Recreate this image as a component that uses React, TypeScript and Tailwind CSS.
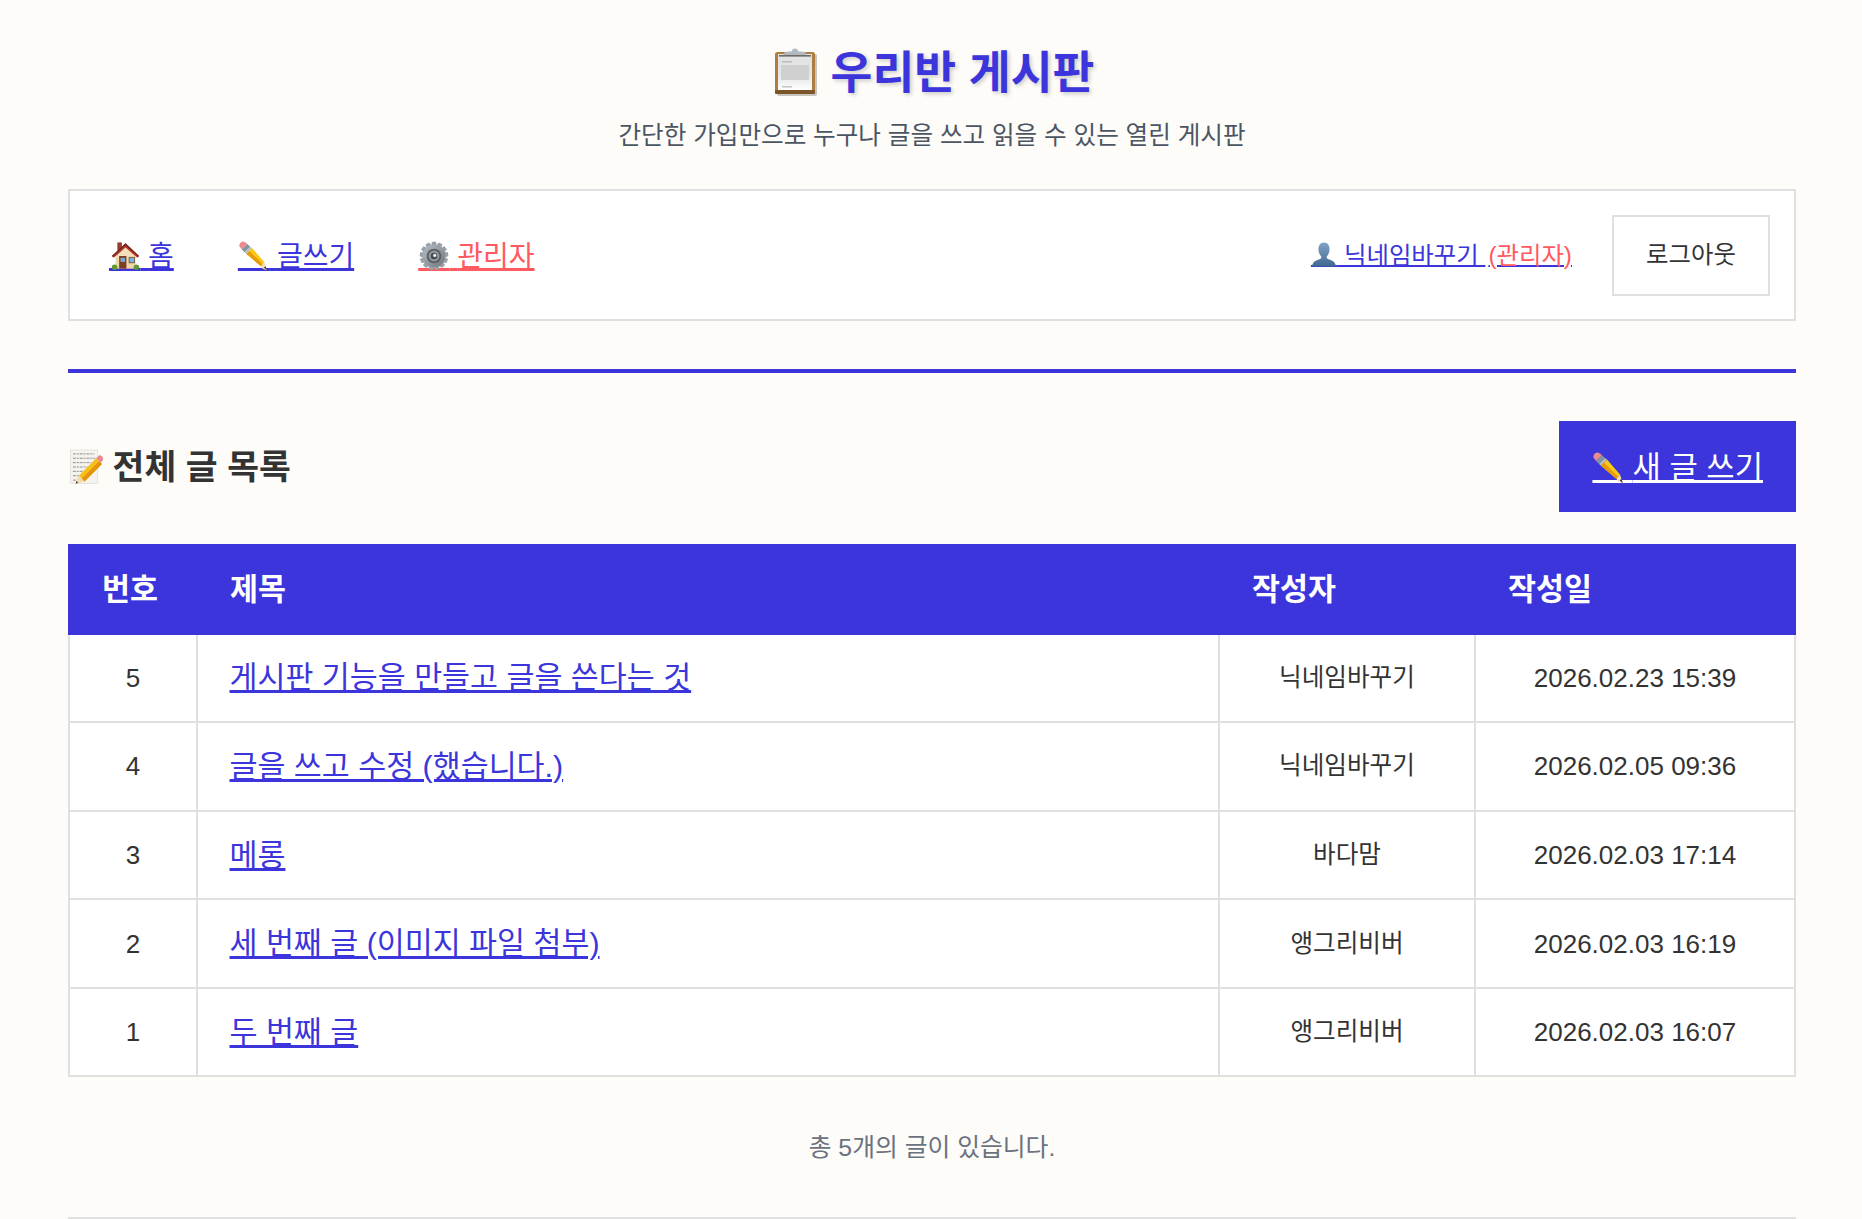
function PencilArt() {
  return (
    <svg viewBox="0 0 32 32" className="h-full w-full">
      <path d="M1.5 5.5 Q1 2.5 3.5 1 Q5.5 -0.2 7.5 1.2 L10 3.2 L4 9 Z" fill="#ea8c8f" />
      <path d="M4 9 L10 3.2 L13 6 L7 12 Z" fill="#87939f" />
      <path d="M7 12 L13 6 L15 7.5 L9 13.8 Z" fill="#b4bcc4" />
      <path d="M9 13.8 L15 7.5 L28 22.5 L24.5 27 Z" fill="#fbc815" />
      <path d="M9 13.8 L12 10.6 L26.5 25 L24.5 27 Z" fill="#e79a0c" />
      <path d="M24.5 27 L28 22.5 L29.5 27.5 L31 31.5 L26.5 29.5 Z" fill="#f1dcae" />
      <path d="M27.8 28.2 L29.4 27 L31 31.5 Z" fill="#2f2a24" />
    </svg>
  );
}
function HouseArt() {
  return (
    <svg viewBox="0 0 32 32" className="h-full w-full">
      <rect x="7" y="1" width="5" height="9" fill="#9c3b2c" />
      <rect x="5" y="13" width="22" height="17" fill="#f2d7a6" />
      <path d="M16 5 L27 15 L27 17 L5 17 L5 15 Z" fill="#f4dfbb" />
      <path d="M1 16 L16 2 L31 16 L29 18 L16 6.5 L3 18 Z" fill="#b8352b" />
      <path d="M1 16 L16 2 L31 16 L30 16.8 L16 4 L2 16.8 Z" fill="#6e2620" />
      <rect x="9" y="16" width="8" height="14" fill="#7c3d28" />
      <rect x="10.5" y="18" width="5" height="4.5" fill="#78aacd" />
      <rect x="19.5" y="17" width="7" height="7" fill="#7a5b44" />
      <rect x="20.5" y="18" width="5" height="5" fill="#79b4dc" />
      <circle cx="4" cy="28.5" r="3" fill="#5f9a35" />
      <circle cx="28" cy="28.5" r="3" fill="#5f9a35" />
    </svg>
  );
}
function GearArt() {
  const teeth = Array.from({ length: 13 }, (_, i) => (i * 360) / 13);
  return (
    <svg viewBox="0 0 32 32" className="h-full w-full">
      <defs>
        <linearGradient id="gearg" x1="0" y1="0" x2="1" y2="1">
          <stop offset="0" stopColor="#b6bec6" />
          <stop offset="1" stopColor="#70757c" />
        </linearGradient>
      </defs>
      {teeth.map((a) => (
        <path key={a} d="M13.8 0.8 L18.2 0.8 L19.2 6 L12.8 6 Z" fill="#9aa1a8" transform={`rotate(${a} 16 16)`} />
      ))}
      <circle cx="16" cy="16" r="12" fill="url(#gearg)" />
      <circle cx="16" cy="16" r="7.8" fill="#5a5e64" />
      <circle cx="16" cy="16" r="5.8" fill="#93979c" />
      <circle cx="16" cy="16" r="3.4" fill="#45484d" />
      <circle cx="16.8" cy="15.4" r="1.7" fill="#f2f2f2" />
    </svg>
  );
}
function PersonArt() {
  return (
    <svg viewBox="0 0 28 28" className="h-full w-full">
      <defs>
        <linearGradient id="pg" x1="0" y1="0" x2="0" y2="1">
          <stop offset="0" stopColor="#82a5c6" />
          <stop offset="1" stopColor="#3f6890" />
        </linearGradient>
      </defs>
      <path d="M14 1 C9.5 1 8 5 8 8.5 C8 12 10 15 11 16 L11 18 C8 20 2 20 1 27 L27 27 C26 20 20 20 17 18 L17 16 C18 15 20 12 20 8.5 C20 5 18.5 1 14 1 Z" fill="url(#pg)" />
    </svg>
  );
}
function Clipboard() {
  return (
    <svg viewBox="0 0 44 48" className="inline-block h-[48px] w-[44px]">
      <defs>
        <linearGradient id="paper" x1="0" y1="0" x2="0" y2="1">
          <stop offset="0" stopColor="#e2e2e2" />
          <stop offset="0.6" stopColor="#e6e6e6" />
          <stop offset="1" stopColor="#ffffff" />
        </linearGradient>
      </defs>
      <rect x="3" y="6" width="40" height="42" rx="2" fill="#c8c5bf" />
      <rect x="1" y="4" width="40" height="42" rx="2.5" fill="#ad7e3f" />
      <rect x="4" y="6" width="34" height="36" fill="url(#paper)" />
      <rect x="8" y="13" width="10" height="1.5" fill="#bcbcbc" />
      <rect x="7" y="17" width="28" height="15" fill="#d0d0d0" />
      <rect x="8" y="38" width="10" height="1.5" fill="#c4c4c4" />
      <path d="M9 8 L11 4 L18 3.2 Q18 0.5 21 0.5 Q24 0.5 24 3.2 L31 4 L33 8 Z" fill="#aeb9c0" />
      <rect x="5" y="7" width="32" height="1.6" fill="#6f6a62" />
      <rect x="1" y="42" width="40" height="4" rx="1" fill="#7c5528" />
    </svg>
  );
}
function Memo() {
  return (
    <svg viewBox="0 0 34 36" className="ml-[2px] inline-block h-[36px] w-[33px] align-[-6px]">
      <rect x="0" y="0" width="29" height="35.5" fill="#e6e4dc" />
      <rect x="1" y="1" width="27" height="33.5" fill="#f4f3ed" />
      <g stroke="#77756f" strokeWidth="0.8" strokeDasharray="3 1 2 1">
        <path d="M3 4.5 H25" />
        <path d="M3 9 H26" />
        <path d="M3 13.5 H22" />
        <path d="M3 18 H18" />
        <path d="M3 22.5 H14" />
        <path d="M3 27 H10" />
        <path d="M3 31.5 H9" />
      </g>
      <path d="M9 27 L27 9 L33 15 L15 33 Z" fill="#f7bf1c" />
      <path d="M12 30 L30 12 L33 15 L15 33 Z" fill="#e3950e" />
      <path d="M9 27 L15 33 L9 34.5 L6.5 32.5 Z" fill="#f1dcae" />
      <path d="M6.5 32.5 L8.5 34.6 L6 35 Z" fill="#2f2a24" />
      <path d="M27 9 L30 6 Q32 5.5 33.5 7.5 Q35 10 33 12 L31 14 L33 15 Z" fill="#e98a8f" />
    </svg>
  );
}

const rows = [
  ["5", "게시판 기능을 만들고 글을 쓴다는 것", "닉네임바꾸기", "2026.02.23 15:39"],
  ["4", "글을 쓰고 수정 (했습니다.)", "닉네임바꾸기", "2026.02.05 09:36"],
  ["3", "메롱", "바다맘", "2026.02.03 17:14"],
  ["2", "세 번째 글 (이미지 파일 첨부)", "앵그리비버", "2026.02.03 16:19"],
  ["1", "두 번째 글", "앵그리비버", "2026.02.03 16:07"],
];

export default function App() {
  return (
    <div className="min-h-[1219px] bg-[#fdfcf8] pl-[68px] pr-[66px] text-[#333333] font-['Liberation_Sans','Noto_Sans_CJK_KR',sans-serif]">
      <header className="pt-[40px] text-center">
        <h1 className="flex h-[64px] items-center justify-center gap-[13px] pl-[4px] text-[45.5px] font-bold text-[#3b35db] [text-shadow:2px_2px_4px_rgba(0,0,0,0.2)]">
          <Clipboard />
          <span className="pt-[4px]">우리반 게시판</span>
        </h1>
        <p className="mt-[14px] text-[24.6px] leading-[36px] text-[#4b5563]">간단한 가입만으로 누구나 글을 쓰고 읽을 수 있는 열린 게시판</p>
      </header>

      <nav className="mt-[35px] flex h-[132px] items-center justify-between border-2 border-[#e0e0e0] bg-white pl-[39px] pr-[24px]">
        <div className="flex items-center gap-[64px] pt-[4px] text-[28px]">
          <a className="text-[#3b35db] underline decoration-[3px]">
            <span className="relative">
              <span className="[word-spacing:23.5px]">{"\u00A0"}</span>
              <span className="absolute bottom-[1px] left-[2px] h-[30px] w-[29px]"><HouseArt /></span>
            </span>{" "}
            홈
          </a>
          <a className="text-[#3b35db] underline decoration-[3px]">
            <span className="relative">
              <span className="[word-spacing:23.5px]">{"\u00A0"}</span>
              <span className="absolute bottom-[1px] left-0 h-[30px] w-[30px]"><PencilArt /></span>
            </span>{" "}
            글쓰기
          </a>
          <a className="text-[#ff5a5f] underline decoration-[3px]">
            <span className="relative">
              <span className="[word-spacing:23.5px]">{"\u00A0"}</span>
              <span className="absolute bottom-[1px] left-[1px] h-[30px] w-[30px]"><GearArt /></span>
            </span>{" "}
            관리자
          </a>
        </div>
        <div className="flex items-center gap-[40px] text-[24.4px]">
          <a className="mt-[3px] text-[#3b35db] underline decoration-[2px]">
            <span className="relative">
              <span className="[word-spacing:19.5px]">{"\u00A0"}</span>
              <span className="absolute bottom-[1px] left-0 h-[27px] w-[26px]"><PersonArt /></span>
            </span>{" "}
            닉네임바꾸기 <span className="ml-[3px] text-[#ff5a5f]">(관리자)</span>
          </a>
          <button className="h-[81px] w-[158px] border-2 border-[#e0e0e0] bg-white text-[24.4px] text-[#333333]">로그아웃</button>
        </div>
      </nav>

      <div className="mt-[48px] h-[4px] bg-[#3b35db]" />

      <section className="mt-[48px] flex h-[91px] items-center justify-between">
        <h2 className="pt-[2px] text-[34.6px] font-bold text-[#333333]"><Memo /> 전체 글 목록</h2>
        <a className="flex h-[91px] items-center bg-[#3b35db] px-[33px] pt-[4px] text-[30.8px] text-white underline decoration-[3px]">
          <span>
            <span className="relative">
              <span className="[word-spacing:23px]">{"\u00A0"}</span>
              <span className="absolute bottom-[1px] left-0 h-[32px] w-[32px]"><PencilArt /></span>
            </span>{" "}
            새 글 쓰기
          </span>
        </a>
      </section>

      <table className="mt-[32px] w-full table-fixed border-collapse bg-white">
        <colgroup>
          <col className="w-[128px]" />
          <col className="w-[1022px]" />
          <col className="w-[256px]" />
          <col />
        </colgroup>
        <thead>
          <tr className="h-[88.5px] bg-[#3b35db] text-left text-[30.4px] font-bold text-white">
            <th className="border-2 border-[#3b35db] pl-[32px] pt-[1px] font-bold">번호</th>
            <th className="border-2 border-[#3b35db] pl-[32px] pt-[1px] font-bold">제목</th>
            <th className="border-2 border-[#3b35db] pl-[32px] pt-[1px] font-bold">작성자</th>
            <th className="border-2 border-[#3b35db] pl-[32px] pt-[1px] font-bold">작성일</th>
          </tr>
        </thead>
        <tbody>
          {rows.map((r) => (
            <tr key={r[0]} className="h-[88.6px]">
              <td className="border-2 border-[#e0e0e0] pt-[1px] text-center text-[26px]">{r[0]}</td>
              <td className="border-2 border-[#e0e0e0] pl-[31.5px] pt-[1px] text-[30.4px] text-[#3b35db] underline decoration-[3px]">{r[1]}</td>
              <td className="border-2 border-[#e0e0e0] pt-[1px] text-center text-[24.6px]">{r[2]}</td>
              <td className="border-2 border-[#e0e0e0] pt-[1px] text-center text-[26px]">{r[3]}</td>
            </tr>
          ))}
        </tbody>
      </table>

      <p className="mt-[53px] text-center text-[24.8px] leading-[36px] text-[#6b7280]">총 5개의 글이 있습니다.</p>
      <div className="mt-[51px] h-[2px] bg-[#e0e0e0]" />
    </div>
  );
}
